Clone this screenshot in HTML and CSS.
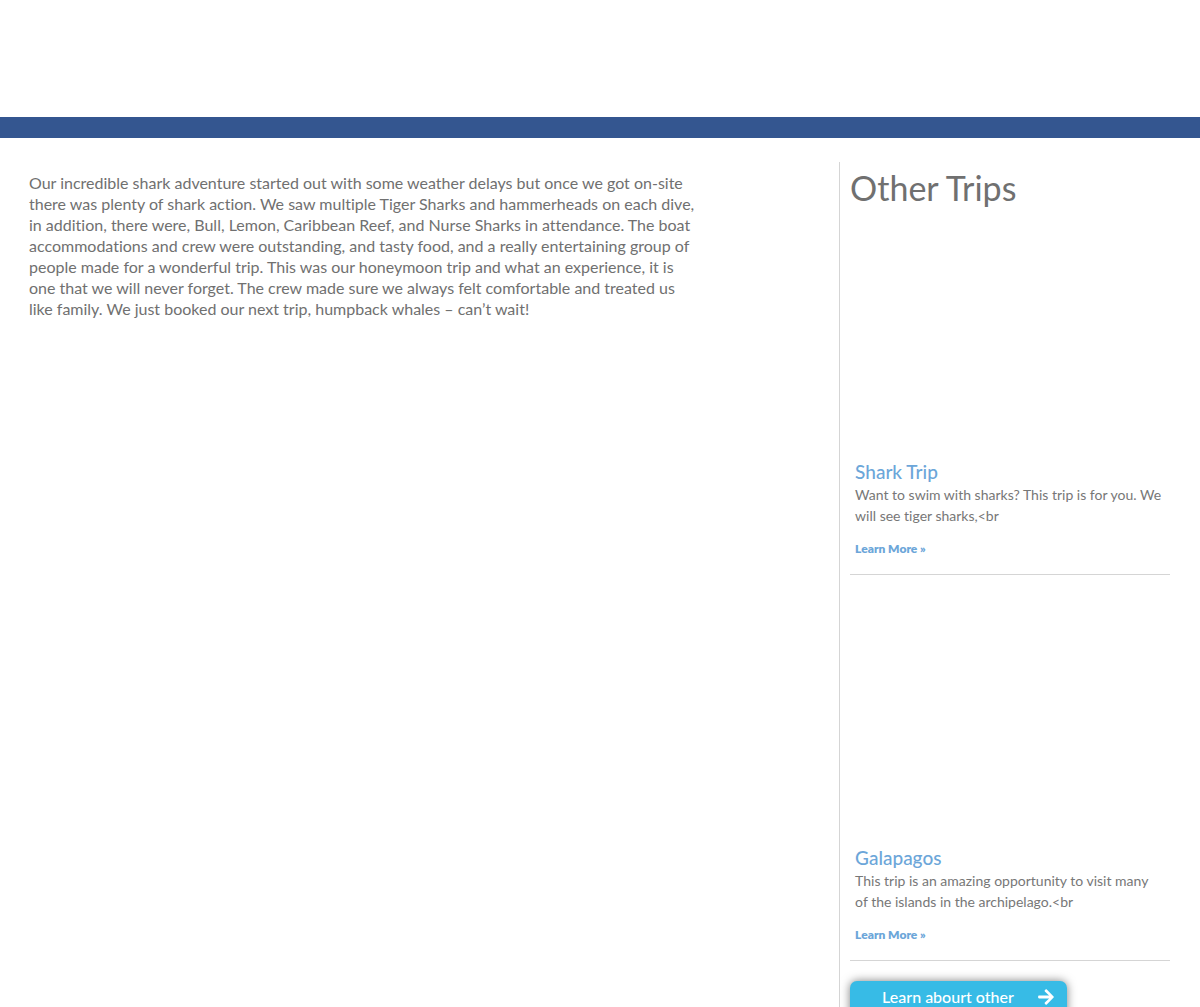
FILE: index.html
```html
<!DOCTYPE html>
<html lang="en">
<head>
<meta charset="utf-8">
<meta name="viewport" content="width=device-width, initial-scale=1">
<title>Shark Trip</title>
<link rel="stylesheet" href="styles.css">
</head>
<body>
<div class="page">
  <header class="banner"></header>
  <div class="layout">
    <main class="story">
      <p class="story-text">Our incredible shark adventure started out with some weather delays but once we got on-site there was plenty of shark action. We saw multiple Tiger Sharks and hammerheads on each dive, in addition, there were, Bull, Lemon, Caribbean Reef, and Nurse Sharks in attendance. The boat accommodations and crew were outstanding, and tasty food, and a really entertaining group of people made for a wonderful trip. This was our honeymoon trip and what an experience, it is one that we will never forget. The crew made sure we always felt comfortable and treated us like family. We just booked our next trip, humpback whales – can’t wait!</p>
    </main>
    <aside class="trips">
      <h2 class="trips-title">Other Trips</h2>
      <div class="trip-list">
        <article class="trip">
          <div class="trip-photo"></div>
          <h3 class="trip-name"><a href="#shark-trip">Shark Trip</a></h3>
          <p class="trip-text">Want to swim with sharks? This trip is for you. We will see tiger sharks,&lt;br</p>
          <a class="trip-more" href="#shark-trip">Learn More »</a>
        </article>
        <article class="trip">
          <div class="trip-photo"></div>
          <h3 class="trip-name"><a href="#galapagos">Galapagos</a></h3>
          <p class="trip-text">This trip is an amazing opportunity to visit many of the islands in the archipelago.&lt;br</p>
          <a class="trip-more" href="#galapagos">Learn More »</a>
        </article>
      </div>
      <button class="more-button" type="button">
        <span class="more-label">Learn abourt other</span>
        <svg class="more-arrow" viewBox="0 0 448 512" aria-hidden="true"><path fill="currentColor" d="M190.500 66.900l22.200-22.200c9.400-9.400 24.600-9.400 33.900 0L441 239c9.400 9.400 9.400 24.600 0 33.900L246.600 467.300c-9.400 9.400-24.600 9.400-33.900 0l-22.200-22.200c-9.500-9.500-9.300-25 .4-34.300L311.400 296H24c-13.300 0-24-10.700-24-24v-32c0-13.300 10.700-24 24-24h287.400L190.900 101.200c-9.800-9.300-10-24.800-.4-34.300z"/></svg>
      </button>
    </aside>
  </div>
</div>
</body>
</html>
```
FILE: styles.css
```css
* {
  box-sizing: border-box;
}

body {
  margin: 0;
  background: #fff;
  color: #707070;
  font-family: Lato, "Liberation Sans", sans-serif;
  font-variant-ligatures: none;
}

h2,
h3,
p {
  margin: 0;
  font-weight: 400;
}

a {
  color: #6ca6d9;
  text-decoration: none;
}

.page {
  height: 100vh;
  overflow: hidden;
}

.banner {
  padding-top: 117px;
  border-bottom: 21px solid #345690;
}

.layout {
  display: grid;
  grid-template-columns: minmax(0, 71fr) minmax(0, 29fr);
  padding: 24px 30px 0 29px;
}

.story {
  padding: 10px 137px 0 0;
}

.story-text {
  font-size: 16px;
  line-height: 21px;
}

.trips {
  padding: 10px 0 0 10px;
  border-left: 1px solid #d5d5d5;
}

.trips-title {
  font-size: 34px;
  line-height: 32px;
}

.trip-list {
  display: grid;
  gap: 15px;
}

.trip {
  padding: 0 5px 15px;
  border-bottom: 1px solid #d5d5d5;
}

.trip-photo {
  aspect-ratio: 310 / 256;
}

.trip-name {
  font-size: 19px;
  font-weight: 500;
  line-height: 24px;
}

.trip-text {
  padding-right: 2px;
  color: #777;
  font-size: 14px;
  line-height: 21px;
}

.trip-more {
  display: block;
  margin-top: 13px;
  font-size: 12px;
  font-weight: 800;
  line-height: 20px;
}

.more-button {
  display: flex;
  align-items: center;
  gap: 24px;
  margin-top: 20px;
  padding: 7px 13px 21px 32px;
  border: 0;
  border-radius: 7px;
  background: #37bbe6;
  box-shadow: 0 0 10px rgba(0, 0, 0, 0.5);
  color: #fff;
  font-family: inherit;
  font-size: 16px;
  font-weight: 500;
  line-height: 18px;
}

.more-arrow {
  width: 16px;
  height: 18px;
}
```
